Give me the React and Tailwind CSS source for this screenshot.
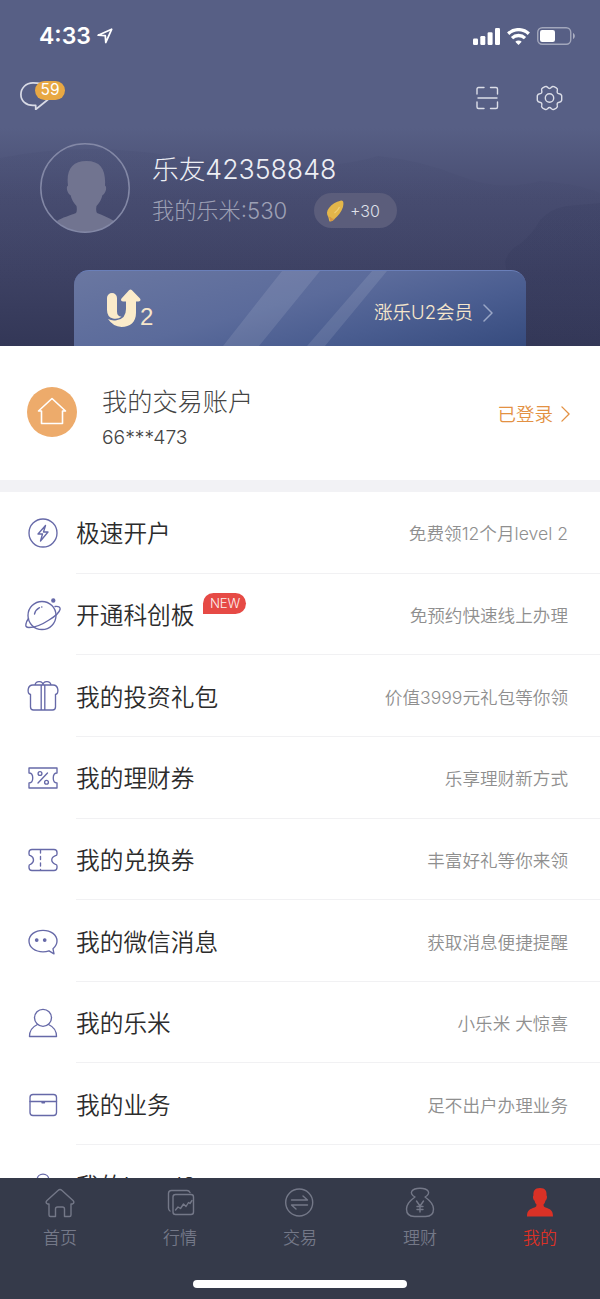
const stroke = {
  fill: "none",
  stroke: "currentColor",
  strokeLinecap: "round",
  strokeLinejoin: "round",
};

function Chevron({ className }) {
  return (
    <svg className={className} viewBox="0 0 10 18" {...stroke} strokeWidth="1.5">
      <path d="M1 1l8 8-8 8" />
    </svg>
  );
}

function StatusBar() {
  return (
    <div className="flex h-[72px] items-center justify-between pl-[39px] pr-[25px]">
      <div className="flex items-center gap-[6px]">
        <span className="font-['Inter'] text-[23px] font-semibold leading-none">4:33</span>
        <svg className="h-[16px] w-[16px]" viewBox="0 0 16 16" {...stroke} strokeWidth="1.8">
          <path d="M1.2 7.2L14.6 1.3 8.8 14.5 8.3 7.7z" />
        </svg>
      </div>
      <div className="flex items-center gap-[7px]">
        <svg className="h-[17px] w-[27px]" viewBox="0 0 27 17" fill="currentColor">
          <rect x="0" y="10.5" width="5" height="6.5" rx="1.2" />
          <rect x="7.3" y="8" width="5" height="9" rx="1.2" />
          <rect x="14.6" y="4.2" width="5" height="12.8" rx="1.2" />
          <rect x="22" y="0" width="5" height="17" rx="1.2" />
        </svg>
        <svg className="h-[17px] w-[23px]" viewBox="0 0 23 17" fill="none" stroke="currentColor" strokeWidth="3.3">
          <path d="M1.2 5.7a15 15 0 0 1 20.6 0" />
          <path d="M5 10.1a9.400 9.400 0 0 1 13 0" />
          <path d="M11.5 17l-3.200-3.200a4.600 4.600 0 0 1 6.400 0z" fill="currentColor" stroke="none" />
        </svg>
        <svg className="h-[18px] w-[38px]" viewBox="0 0 38 18">
          <rect x=".75" y=".75" width="33" height="16.5" rx="4.5" fill="none" stroke="#fff" strokeOpacity=".45" strokeWidth="1.4" />
          <rect x="3" y="3" width="15" height="12" rx="2.2" fill="#fff" />
          <path d="M36 6c2.4 1 2.4 5 0 6z" fill="#fff" fillOpacity=".5" />
        </svg>
      </div>
    </div>
  );
}

function TopActions() {
  return (
    <div className="flex h-[52px] items-center justify-between pl-5 pr-[37px]">
      <div className="relative mb-[5px] h-[28px] w-[46px]">
        <svg className="h-[28px] w-[30px] text-[#d9dbe6]" viewBox="0 0 30 28" {...stroke} strokeWidth="1.7">
          <path d="M26 4C23 1.4 18 .9 13 .9 6 .9 .9 6 .9 12.5S6 23.3 13 23.3h2.7v4.2L28 17.5" />
        </svg>
        <span className="absolute left-[15px] top-[-1px] flex h-[19px] w-[30px] items-center justify-center rounded-full bg-[#e8a843] font-['Inter'] text-[15.5px] leading-none">
          59
        </span>
      </div>
      <div className="flex items-center gap-[37px] text-[#dcdee8]">
        <svg className="h-[24px] w-[24px]" viewBox="0 0 24 24" {...stroke} strokeWidth="1.4">
          <path d="M2 8V3q0-1.5 1.5-1.5h5.500M15.500 1.500H21q1.500 0 1.500 1.500v5M22.500 16v5q0 1.500-1.500 1.500h-5.500M9 22.500H3.500Q2 22.500 2 21v-5M3 12h19" />
        </svg>
        <svg className="h-[26px] w-[27px]" viewBox="0 0 27 26" {...stroke} strokeWidth="1.4">
          <path d="M9 1.700Q10.700 1 11.600 2.300Q13.500 4.700 15.400 2.300Q16.300 1 18 1.700L20.300 2.900Q22 3.900 21.300 5.700Q20.500 8.300 23.300 8.800Q25.200 9 25.700 10.800V15.200Q25.200 17 23.300 17.200Q20.500 17.700 21.300 20.300Q22 22.100 20.300 23.100L18 24.300Q16.300 25 15.400 23.700Q13.500 21.300 11.600 23.700Q10.700 25 9 24.300L6.700 23.100Q5 22.100 5.700 20.300Q6.500 17.700 3.700 17.200Q1.800 17 1.300 15.200V10.800Q1.800 9 3.700 8.800Q6.500 8.300 5.700 5.700Q5 3.900 6.700 2.900Z" />
          <circle cx="13.500" cy="13" r="4.200" />
        </svg>
      </div>
    </div>
  );
}

function Avatar() {
  return (
    <svg className="h-[90px] w-[90px] shrink-0" viewBox="0 0 90 90">
      <path
        fill="#717490"
        d="M17 78c5-3.500 13-5.500 19-8 1-1.500 1-4 .5-7-3-3-5-7-6-11-3-1-5-8-2.500-9.500C26 27 32 18 46.500 18S66 27 65 42.500c2.500 1.500.5 8.500-2.500 9.500-1 4-3 8-6 11-.5 3-.5 5.500.5 7 6 2.500 12 4.500 17 8-15 15-42 15-57 0z"
      />
      <circle cx="45" cy="45" r="44.200" fill="none" stroke="#8388a6" strokeWidth="1.500" />
    </svg>
  );
}

function Profile() {
  return (
    <div className="flex h-[145px] items-start pl-10 pt-[19px]">
      <Avatar />
      <div className="ml-[22px] pt-[7px]">
        <div className="text-[26.700px] font-light leading-[38px] text-[#edeef4]">乐友42358848</div>
        <div className="mt-[5px] flex items-center">
          <span className="w-[162px] whitespace-nowrap text-[22.200px] font-light leading-[34px] text-[#9da0b5]">我的乐米:530</span>
          <span className="flex h-[35px] w-[83px] items-center rounded-full bg-[#5b5d7b] pl-[12px] text-[16px] font-light text-[#dfe0ea]">
            <svg className="mr-[6px] h-[22px] w-[18px]" viewBox="0 0 18 22">
              <path d="M14.500.7C17.500 0 18 3 17 7c-1.500 5-5 9-8.500 12-1 1.500-2.500 2.500-5 2.500C2.500 19.500 3 18 2 16.500.5 14 .5 11 3 8 6 4 10 1.500 14.500.7z" fill="#e3b64a" />
              <path d="M2 16.500c2 .5 2 3 2.500 5 2-.3 3-1.500 4-2.500-1.500 0-3-1-4-2z" fill="#d79744" />
              <path d="M13.500 7c-1 2.500-3 4.500-5 6" fill="none" stroke="#f0d078" strokeWidth="1.200" />
            </svg>
            +30
          </span>
        </div>
      </div>
    </div>
  );
}

function MemberCard() {
  return (
    <div className="relative mx-auto mt-px flex h-[76px] w-[452px] items-center justify-between overflow-hidden rounded-t-[15px] border-t-[1.500px] border-[#6a7fb9] bg-linear-[165deg,#6a77a1_0%,#5b6b9b_45%,#4a5d90_70%,#364b7e_100%] pl-[31px] pr-[33px] text-[#f6e6cb]">
      <svg className="absolute left-0 top-0 h-full w-full" viewBox="0 0 452 76" preserveAspectRatio="none">
        <path d="M208 0h38L185 76h-36zM298 0h15L251 76h-18z" fill="#fff" fillOpacity=".1" />
      </svg>
      <div className="relative mb-[2px] flex items-end">
        <svg className="h-[38px] w-[36px]" viewBox="0 0 36 38" fill="#fbebca">
          <path d="M2 9a5 5 0 0 1 10 0v13.500q0 5 4.500 5.200Q13 30.500 8 29.500 2 28 2 21z" />
          <path d="M3 30q4 2 8.500 1.200Q21 30 21 20v-7.500h-3q-3-.5-1.500-3L24 1.300q1.500-1.600 3 0l8 8.200q1.500 2.500-1.500 3H31V24c0 9-6 14-14.500 14Q8 37.500 3 30z" />
        </svg>
        <span className="mb-[-3px] ml-[-1px] font-['Liberation_Sans'] text-[24px] leading-[26px]">2</span>
      </div>
      <div className="relative mt-[7px] flex items-center gap-[10px]">
        <span className="text-[18.500px] font-[350] leading-6">涨乐U2会员</span>
        <Chevron className="mt-[2px] h-[18px] w-[10px] text-[#9aa6c6]" />
      </div>
    </div>
  );
}

function Hero() {
  return (
    <header className="relative h-[346px] overflow-hidden bg-linear-[180deg,#575f85_0%,#575f85_37%,#484d71_57%,#3e4264_78%,#333757_100%] text-white">
      <svg className="absolute left-0 top-0 h-full w-full" viewBox="0 0 600 346">
        <defs>
          <linearGradient id="hill" x1="0" y1="0" x2="0" y2="1">
            <stop offset="0" stopColor="#33385c" stopOpacity=".09" />
            <stop offset="1" stopColor="#33385c" stopOpacity="0" />
          </linearGradient>
          <linearGradient id="trees" x1="0" y1="0" x2="0" y2="1">
            <stop offset="0" stopColor="#2c3154" stopOpacity=".14" />
            <stop offset=".5" stopColor="#2c3154" stopOpacity=".18" />
            <stop offset="1" stopColor="#2c3154" stopOpacity="0" />
          </linearGradient>
        </defs>
        <path d="M0 158Q60 146 120 150T250 170Q340 168 378 156 420 160 460 176T540 181Q580 184 600 193V300H0z" fill="url(#hill)" />
        <path d="M505 262Q508 250 520 244 534 232 540 220 552 208 566 206L600 203V346H520z" fill="url(#trees)" />
      </svg>
      <div className="relative">
        <StatusBar />
        <TopActions />
        <Profile />
        <MemberCard />
      </div>
    </header>
  );
}

function Account() {
  return (
    <section className="flex h-[146px] items-start border-b-[12px] border-[#f2f2f5] pl-[27px] pr-[30px]">
      <span className="mt-[41px] flex h-[50px] w-[50px] items-center justify-center rounded-full bg-[#edab6b] text-white">
        <svg className="mb-[2px] h-[28px] w-[30px]" viewBox="0 0 30 28" {...stroke} strokeWidth="1.600">
          <path d="M4.500 14H1.500L15 1.500 28.500 14H25.500V26.500H4.500z" />
        </svg>
      </span>
      <div className="ml-[25px] mt-[37px] flex-1 text-[#444]">
        <div className="text-[25.200px] font-light leading-[38px]">我的交易账户</div>
        <div className="font-['Inter'] text-[19.300px] font-light leading-[33px]">66***473</div>
      </div>
      <div className="mt-[55px] flex items-center gap-2 text-[#e39143]">
        <span className="text-[18.500px] font-[350] leading-[26px]">已登录</span>
        <Chevron className="h-[16px] w-[9px]" />
      </div>
    </section>
  );
}

const icons = {
  bolt: (
    <>
      <circle cx="18" cy="18" r="14" />
      <path d="M20.500 10.500L13 19h4.500l-2 7L23 17h-4.500z" />
    </>
  ),
  planet: (
    <>
      <circle cx="17" cy="18.500" r="14" />
      <path d="M30 9.500c4-.5 5.500 1 5 3-1 4.500-6 7.500-11 10.500-6 4-14 7.500-20 7.500C1 30.500.5 29 1 27c.3-2 1-3.500 2.500-5.500" />
      <path d="M9.500 17c.7-2.800 2.500-5 5-6.300M16.700 10h.2" />
      <circle cx="28.300" cy="3.500" r="1.500" fill="currentColor" />
    </>
  ),
  gift: (
    <>
      <path d="M8 7h20c6 0 6 8.500 2.500 9.500V29q0 3-3 3h-19q-3 0-3-3V16.500C2 15.500 2 7 8 7zM16.200 7v25M19.800 7v25M10 7c1-5 8-4 8 0 0-4 7-5 8 0" />
    </>
  ),
  percent: (
    <>
      <path d="M4 8h28v5c-5 0-5 10 0 10v5H4v-5c5 0 5-10 0-10zM22.500 13l-9.500 10" />
      <circle cx="15" cy="13.500" r="1.900" />
      <circle cx="21.500" cy="22.300" r="1.900" />
    </>
  ),
  ticket: (
    <>
      <path d="M7 7.500h22q3 0 3 3V12q0 1.500-1.500 1.700c-5 2-5 6.600 0 8.600Q32 22.500 32 24v1.500q0 3-3 3H7q-3 0-3-3V24q0-1.500 1.500-1.700c4-2 4-6.600 0-8.600Q4 13.500 4 12v-1.500q0-3 3-3z" />
      <path d="M15.500 8v20" strokeDasharray="3 3.500" />
    </>
  ),
  chat: (
    <>
      <path d="M24 27.800c-2 .7-4 1-6 1-8 0-14-4.500-14-10.700S10 7.300 18 7.300s14 4.600 14 10.800c0 3-1.500 5.500-4 7.700l1 5z" />
      <circle cx="11.700" cy="17" r="1.200" fill="currentColor" />
      <circle cx="19.700" cy="17" r="1.200" fill="currentColor" />
    </>
  ),
  user: (
    <>
      <circle cx="18" cy="12.800" r="8.500" />
      <path d="M12.500 19.500C7 22 4.500 26 4.500 31.500h27c0-5.500-2.500-9.500-8-12" />
    </>
  ),
  box: (
    <>
      <rect x="5" y="8.500" width="26.500" height="21" rx="3" />
      <path d="M5 15.500h26.500M17 16.700h2.500" />
    </>
  ),
  bag: (
    <>
      <path d="M6.500 12.500h23V31h-23zM12 12.500c0-8.500 12-8.500 12 0" />
    </>
  ),
};

const rows = [
  { icon: "bolt", title: "极速开户", note: "免费领12个月level 2" },
  { icon: "planet", title: "开通科创板", note: "免预约快速线上办理", isNew: true },
  { icon: "gift", title: "我的投资礼包", note: "价值3999元礼包等你领" },
  { icon: "percent", title: "我的理财券", note: "乐享理财新方式" },
  { icon: "ticket", title: "我的兑换券", note: "丰富好礼等你来领" },
  { icon: "chat", title: "我的微信消息", note: "获取消息便捷提醒" },
  { icon: "user", title: "我的乐米", note: "小乐米 大惊喜" },
  { icon: "box", title: "我的业务", note: "足不出户办理业务" },
  { icon: "bag", title: "我的Level2", note: "投资决策快" },
];

function Row({ icon, title, note, isNew }) {
  return (
    <li className="flex h-[81.650px] pl-[25px]">
      <svg className="mt-[23px] h-[36px] w-[36px] shrink-0 text-[#6669a8]" viewBox="0 0 36 36" {...stroke} strokeWidth="1.350">
        {icons[icon]}
      </svg>
      <div className="ml-[15px] flex flex-1 items-center justify-between border-b-[1.500px] border-[#f1f1f3] pr-[32px] pt-[4px]">
        <span className="flex text-[23.700px] font-[350] leading-9 tracking-[-0.01em] text-[#2c2c2c]">
          <span className="tracking-normal">{title}</span>
          {isNew && (
            <span className="ml-[9px] mt-[-5px] flex h-[21px] w-[43px] items-center justify-center rounded-full rounded-bl-none bg-[#e64a45] font-['Inter'] text-[13.200px] leading-none text-[#fdeeee]">
              NEW
            </span>
          )}
        </span>
        <span className="text-[17.600px] font-[350] leading-6 text-[#8f8f8f]">{note}</span>
      </div>
    </li>
  );
}

const tabs = [
  {
    label: "首页",
    icon: <path d="M3.500 17Q1 15.500 3 13.500L14 3.500q2-1.800 4 0l11 10q2 2-.5 3.500H27v11q0 1.500-1.500 1.500h-5V22q0-2-2-2h-5q-2 0-2 2v7.500h-5Q5 29.500 5 28V17z" />,
  },
  {
    label: "行情",
    icon: (
      <>
        <path d="M6 24Q4.500 23 4.500 21V6.500q0-3 3-3H23q2 0 3 2" />
        <rect x="9" y="7.500" width="20.500" height="20" rx="2.500" />
        <path d="M11.500 23l2.500-3 2.500 1.500 3-4.500 2.500 2.500 2.500-4 1.500 1 2-3" />
      </>
    ),
  },
  {
    label: "交易",
    icon: (
      <>
        <circle cx="15.200" cy="15.500" r="13.500" />
        <path d="M7.500 13h16L19 9M23.500 18h-16l4.500 4" />
      </>
    ),
  },
  {
    label: "理财",
    icon: (
      <>
        <path d="M11 10C4 6 8 1.200 16 1.200S28 6 21 10c5 3.500 8.500 8 8.500 12 0 5-3 7.500-8 7.500h-11c-5 0-8-2.500-8-7.500 0-4 3.500-8.500 8.500-12z" />
        <path d="M12.500 14l3.500 5 3.500-5M16 19v6M13 19.500h6M13 22.500h6" />
      </>
    ),
  },
  {
    label: "我的",
    active: true,
    icon: (
      <path
        fill="currentColor"
        stroke="none"
        d="M16 1c5.500 0 7 3.500 6.500 7.500 1 .5.500 4.500-1 5-.5 2-1 3-2 4 0 1.500.5 2.500 2 3 4.500 1.500 7.500 2.500 7.500 9H3c0-6.500 3-7.500 7.500-9 1.500-.5 2-1.500 2-3-1-1-1.500-2-2-4-1.500-.5-2-4.500-1-5C9 4.500 10.500 1 16 1z"
      />
    ),
  },
];

function TabBar() {
  return (
    <nav className="h-[121px] bg-[#353a4a]">
      <div className="flex h-[102px]">
        {tabs.map((tab) => (
          <div
            key={tab.label}
            className={`flex flex-1 flex-col items-center pt-[9px] ${tab.active ? "text-[#da3126]" : "text-[#747888]"}`}
          >
            <svg className="h-[32px] w-[32px]" viewBox="0 0 32 32" {...stroke} strokeWidth="1.400">
              {tab.icon}
            </svg>
            <span className="mt-[7px] text-[17px] font-[350] leading-6">{tab.label}</span>
          </div>
        ))}
      </div>
      <div className="mx-auto h-[8px] w-[214px] rounded-full bg-white" />
    </nav>
  );
}

export default function App() {
  return (
    <div className="flex h-[1299px] w-[600px] flex-col overflow-hidden bg-white font-['Inter','Noto_Sans_CJK_SC',sans-serif]">
      <Hero />
      <Account />
      <ul className="h-[686px] overflow-hidden">
        {rows.map((row) => (
          <Row key={row.title} {...row} />
        ))}
      </ul>
      <TabBar />
    </div>
  );
}
